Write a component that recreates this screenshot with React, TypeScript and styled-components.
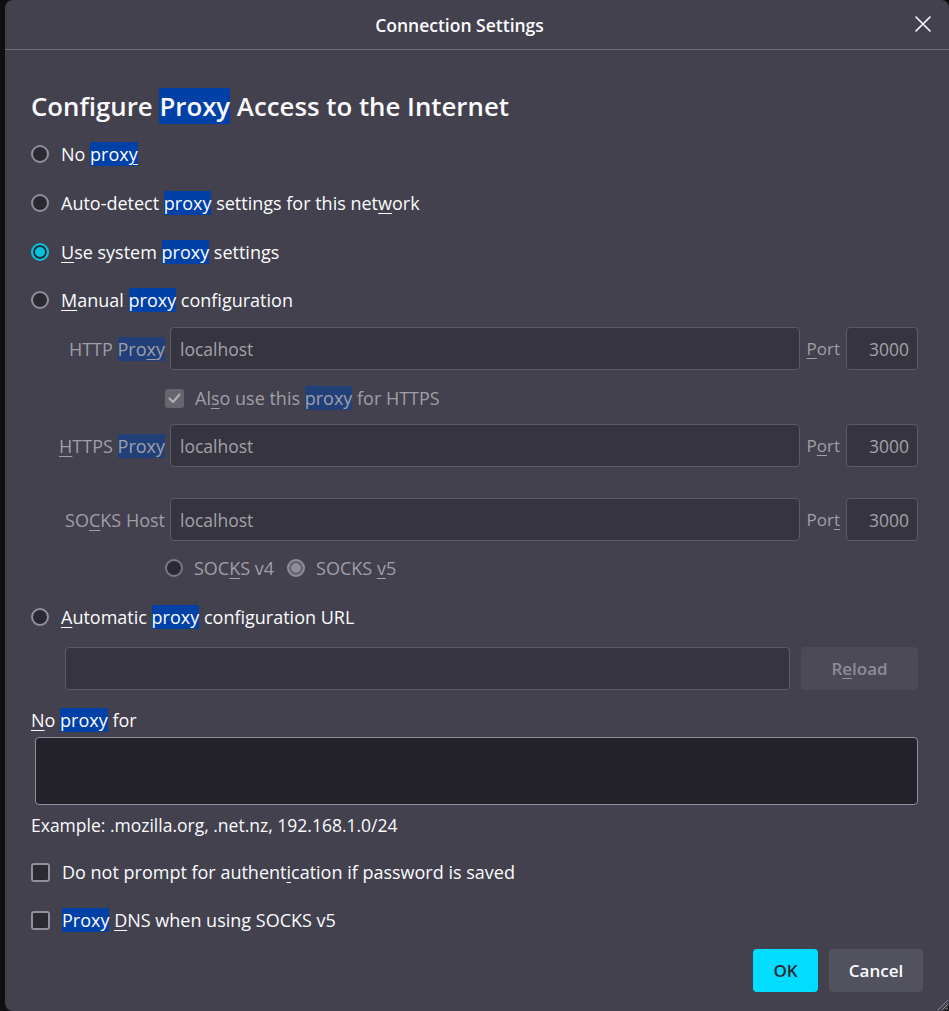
import React from "react";
import styled, { createGlobalStyle } from "styled-components";

const Global = createGlobalStyle`
  html, body { margin: 0; padding: 0; background: #0f0f12; }
  body { font-family: "Open Sans", "Noto Sans", sans-serif; color: #fbfbfe; }
  * { box-sizing: border-box; }
`;

const Page = styled.div`
  display: flex;
  height: 1011px;
  padding-left: 5px;
  overflow: hidden;
`;

const Dialog = styled.div`
  position: relative;
  flex: 1;
  background: #42414d;
  border-radius: 8px;
  display: flex;
  flex-direction: column;
`;

const Header = styled.header`
  position: relative;
  height: 50px;
  padding-right: 35px;
  border-bottom: 1px solid #6f6e78;
  display: flex;
  align-items: center;
  justify-content: center;
`;

const Title = styled.h1`
  margin: 0;
  font-size: 17.5px;
  font-weight: 600;
  color: #fbfbfe;
`;

const CloseButton = styled.button`
  position: absolute;
  right: 12px;
  top: 10px;
  width: 28px;
  height: 28px;
  padding: 0;
  border: 0;
  background: none;
  display: flex;
  align-items: center;
  justify-content: center;
  color: #fbfbfe;
`;

const Body = styled.main`
  display: flex;
  flex-direction: column;
  padding: 38px 31px 0 26px;
`;

const Heading = styled.h2`
  margin: 0;
  font-size: 25.8px;
  font-weight: 600;
  line-height: 37px;
`;

const Row = styled.div<{ $mt: number; $indent?: number }>`
  display: flex;
  align-items: center;
  min-height: 24px;
  margin-top: ${(p) => p.$mt}px;
  margin-left: ${(p) => p.$indent ?? 0}px;
  font-size: 18px;
  line-height: 24px;
`;

const Option = styled.label<{ $disabled?: boolean; $gap?: number }>`
  display: flex;
  align-items: center;
  gap: ${(p) => p.$gap ?? 12}px;
  color: ${(p) => (p.$disabled ? "#a09fa7" : "#fbfbfe")};
  white-space: nowrap;
`;

const Radio = styled.span<{ $checked?: boolean; $disabled?: boolean }>`
  flex: none;
  width: 18px;
  height: 18px;
  border-radius: 50%;
  border: 2px solid
    ${(p) => (p.$checked ? (p.$disabled ? "#8f8e98" : "#08bfdc") : p.$disabled ? "#7a7983" : "#8f8f9d")};
  background: ${(p) => (p.$checked ? (p.$disabled ? "#8f8e98" : "#08bfdc") : "#2b2a33")};
  box-shadow: ${(p) => (p.$checked ? `inset 0 0 0 2px ${p.$disabled ? "#5d5c66" : "#2b2a33"}` : "none")};
`;

const Check = styled.span<{ $checked?: boolean; $disabled?: boolean }>`
  flex: none;
  width: 19px;
  height: 19px;
  border-radius: 3px;
  border: 2px solid ${(p) => (p.$checked ? "transparent" : "#8f8f9d")};
  background: ${(p) => (p.$checked ? (p.$disabled ? "#67666f" : "#00ddff") : "#2b2a33")};
  display: flex;
  align-items: center;
  justify-content: center;
  color: #b3b2b9;
`;

const Hl = styled.span<{ $dim?: boolean }>`
  background: ${(p) => (p.$dim ? "#213f78" : "#0041a8")};
`;

const Key = styled.u`
  text-decoration-thickness: 1px;
  text-underline-offset: 3px;
`;

const FieldLabel = styled.label<{ $width?: number }>`
  flex: none;
  width: ${(p) => (p.$width ? `${p.$width}px` : "auto")};
  text-align: right;
  color: #a09fa7;
  font-size: 18px;
  white-space: nowrap;
`;

const TextInput = styled.input<{ $align?: string }>`
  flex: 1;
  min-width: 0;
  height: 43px;
  border-radius: 4px;
  border: 1px solid #5b5a65;
  background: #35343f;
  padding: 0 8px 0 9px;
  font: inherit;
  font-size: 17.5px;
  color: #a3a2aa;
  -webkit-text-fill-color: #a3a2aa;
  opacity: 1;
  text-align: ${(p) => p.$align ?? "left"};
  outline: none;
`;

const PortInput = styled(TextInput)`
  flex: none;
  width: 72px;
`;

const FieldRow = styled.div<{ $mt: number; $indent?: number }>`
  display: flex;
  align-items: center;
  margin-top: ${(p) => p.$mt}px;
  margin-left: ${(p) => p.$indent ?? 0}px;
`;

const PortLabel = styled(FieldLabel)`
  margin: 0 6px 0 7px;
  font-size: 17px;
`;

const HostInput = styled(TextInput)`
  margin-left: 5px;
`;

const ReloadButton = styled.button`
  flex: none;
  width: 117px;
  height: 43px;
  margin-left: 11px;
  border: 0;
  border-radius: 4px;
  background: #4b4a56;
  color: #8e8d96;
  font-family: "Open Sans", sans-serif;
  font-weight: 600;
  font-size: 17px;
`;

const Area = styled.textarea`
  margin: 5px 0 0 4px;
  height: 68px;
  border-radius: 4px;
  border: 1px solid #8f8f9d;
  background: #23222b;
  resize: none;
  outline: none;
  color: #fbfbfe;
`;

const Example = styled.div`
  margin-top: 8px;
  font-size: 17.5px;
  line-height: 24px;
`;

const Footer = styled.footer`
  display: flex;
  justify-content: flex-end;
  gap: 11px;
  padding: 0 26px;
  margin-top: 17px;
`;

const Button = styled.button<{ $primary?: boolean; $w: number }>`
  width: ${(p) => p.$w}px;
  height: 43px;
  padding: 0;
  border: 0;
  border-radius: 4px;
  font-family: "Open Sans", sans-serif;
  font-weight: 600;
  font-size: 17px;
  background: ${(p) => (p.$primary ? "#00ddff" : "#52515e")};
  color: ${(p) => (p.$primary ? "#2b2a33" : "#fbfbfe")};
`;

const Grip = styled.svg`
  position: absolute;
  right: 0;
  bottom: 0;
`;

export default function App() {
  return (
    <>
      <Global />
      <Page>
        <Dialog>
          <Header>
            <Title>Connection Settings</Title>
            <CloseButton aria-label="Close">
              <svg width="16" height="16" viewBox="0 0 16 16">
                <path d="M1 1 L15 15 M15 1 L1 15" stroke="#fbfbfe" strokeWidth="1.6" strokeLinecap="round" />
              </svg>
            </CloseButton>
          </Header>
          <Body>
            <Heading>
              Configure <Hl>Proxy</Hl> Access to the Internet
            </Heading>
            <Row $mt={17}>
              <Option>
                <Radio />
                <span>
                  No <Hl>prox<Key>y</Key></Hl>
                </span>
              </Option>
            </Row>
            <Row $mt={25}>
              <Option>
                <Radio />
                <span>
                  Auto-detect <Hl>proxy</Hl> settings for this net<Key>w</Key>ork
                </span>
              </Option>
            </Row>
            <Row $mt={25}>
              <Option>
                <Radio $checked />
                <span>
                  <Key>U</Key>se system <Hl>proxy</Hl> settings
                </span>
              </Option>
            </Row>
            <Row $mt={24}>
              <Option>
                <Radio />
                <span>
                  <Key>M</Key>anual <Hl>proxy</Hl> configuration
                </span>
              </Option>
            </Row>

            <FieldRow $mt={15}>
              <FieldLabel $width={134}>
                HTTP <Hl $dim>Pro<Key>x</Key>y</Hl>
              </FieldLabel>
              <HostInput disabled value="localhost" readOnly />
              <PortLabel>
                <Key>P</Key>ort
              </PortLabel>
              <PortInput $align="right" disabled value="3000" readOnly />
            </FieldRow>

            <Row $mt={16} $indent={134}>
              <Option $disabled $gap={11}>
                <Check $checked $disabled>
                  <svg width="13" height="11" viewBox="0 0 13 11">
                    <path d="M1.5 5.5 L5 9 L11.5 1.5" fill="none" stroke="#b3b2b9" strokeWidth="2" strokeLinecap="round" strokeLinejoin="round" />
                  </svg>
                </Check>
                <span>
                  Al<Key>s</Key>o use this <Hl $dim>proxy</Hl> for HTTPS
                </span>
              </Option>
            </Row>

            <FieldRow $mt={14}>
              <FieldLabel $width={134}>
                <Key>H</Key>TTPS <Hl $dim>Proxy</Hl>
              </FieldLabel>
              <HostInput disabled value="localhost" readOnly />
              <PortLabel>
                P<Key>o</Key>rt
              </PortLabel>
              <PortInput $align="right" disabled value="3000" readOnly />
            </FieldRow>

            <FieldRow $mt={31}>
              <FieldLabel $width={134}>
                SO<Key>C</Key>KS Host
              </FieldLabel>
              <HostInput disabled value="localhost" readOnly />
              <PortLabel>
                Por<Key>t</Key>
              </PortLabel>
              <PortInput $align="right" disabled value="3000" readOnly />
            </FieldRow>

            <Row $mt={15} $indent={134}>
              <Option $disabled $gap={11}>
                <Radio $disabled />
                <span>
                  SOC<Key>K</Key>S v4
                </span>
              </Option>
              <Option $disabled $gap={11} style={{ marginLeft: 13 }}>
                <Radio $checked $disabled />
                <span>
                  SOCKS <Key>v</Key>5
                </span>
              </Option>
            </Row>

            <Row $mt={25}>
              <Option>
                <Radio />
                <span>
                  <Key>A</Key>utomatic <Hl>proxy</Hl> configuration URL
                </span>
              </Option>
            </Row>

            <FieldRow $mt={18} $indent={34}>
              <TextInput disabled value="" readOnly />
              <ReloadButton disabled>
                R<Key>e</Key>load
              </ReloadButton>
            </FieldRow>

            <Row $mt={18}>
              <span>
                <Key>N</Key>o <Hl>proxy</Hl> for
              </span>
            </Row>
            <Area />
            <Example>Example: .mozilla.org, .net.nz, 192.168.1.0/24</Example>

            <Row $mt={23}>
              <Option>
                <Check />
                <span>
                  Do not prompt for authent<Key>i</Key>cation if password is saved
                </span>
              </Option>
            </Row>
            <Row $mt={24}>
              <Option>
                <Check />
                <span>
                  <Hl>Proxy</Hl> <Key>D</Key>NS when using SOCKS v5
                </span>
              </Option>
            </Row>
          </Body>
          <Footer>
            <Button $primary $w={65}>OK</Button>
            <Button $w={94}>Cancel</Button>
          </Footer>
          <Grip width="14" height="14" viewBox="0 0 14 14">
            <path d="M13 3 L3 13 M13 7 L7 13 M13 11 L11 13" stroke="#8a8993" strokeWidth="1" />
          </Grip>
        </Dialog>
      </Page>
    </>
  );
}
